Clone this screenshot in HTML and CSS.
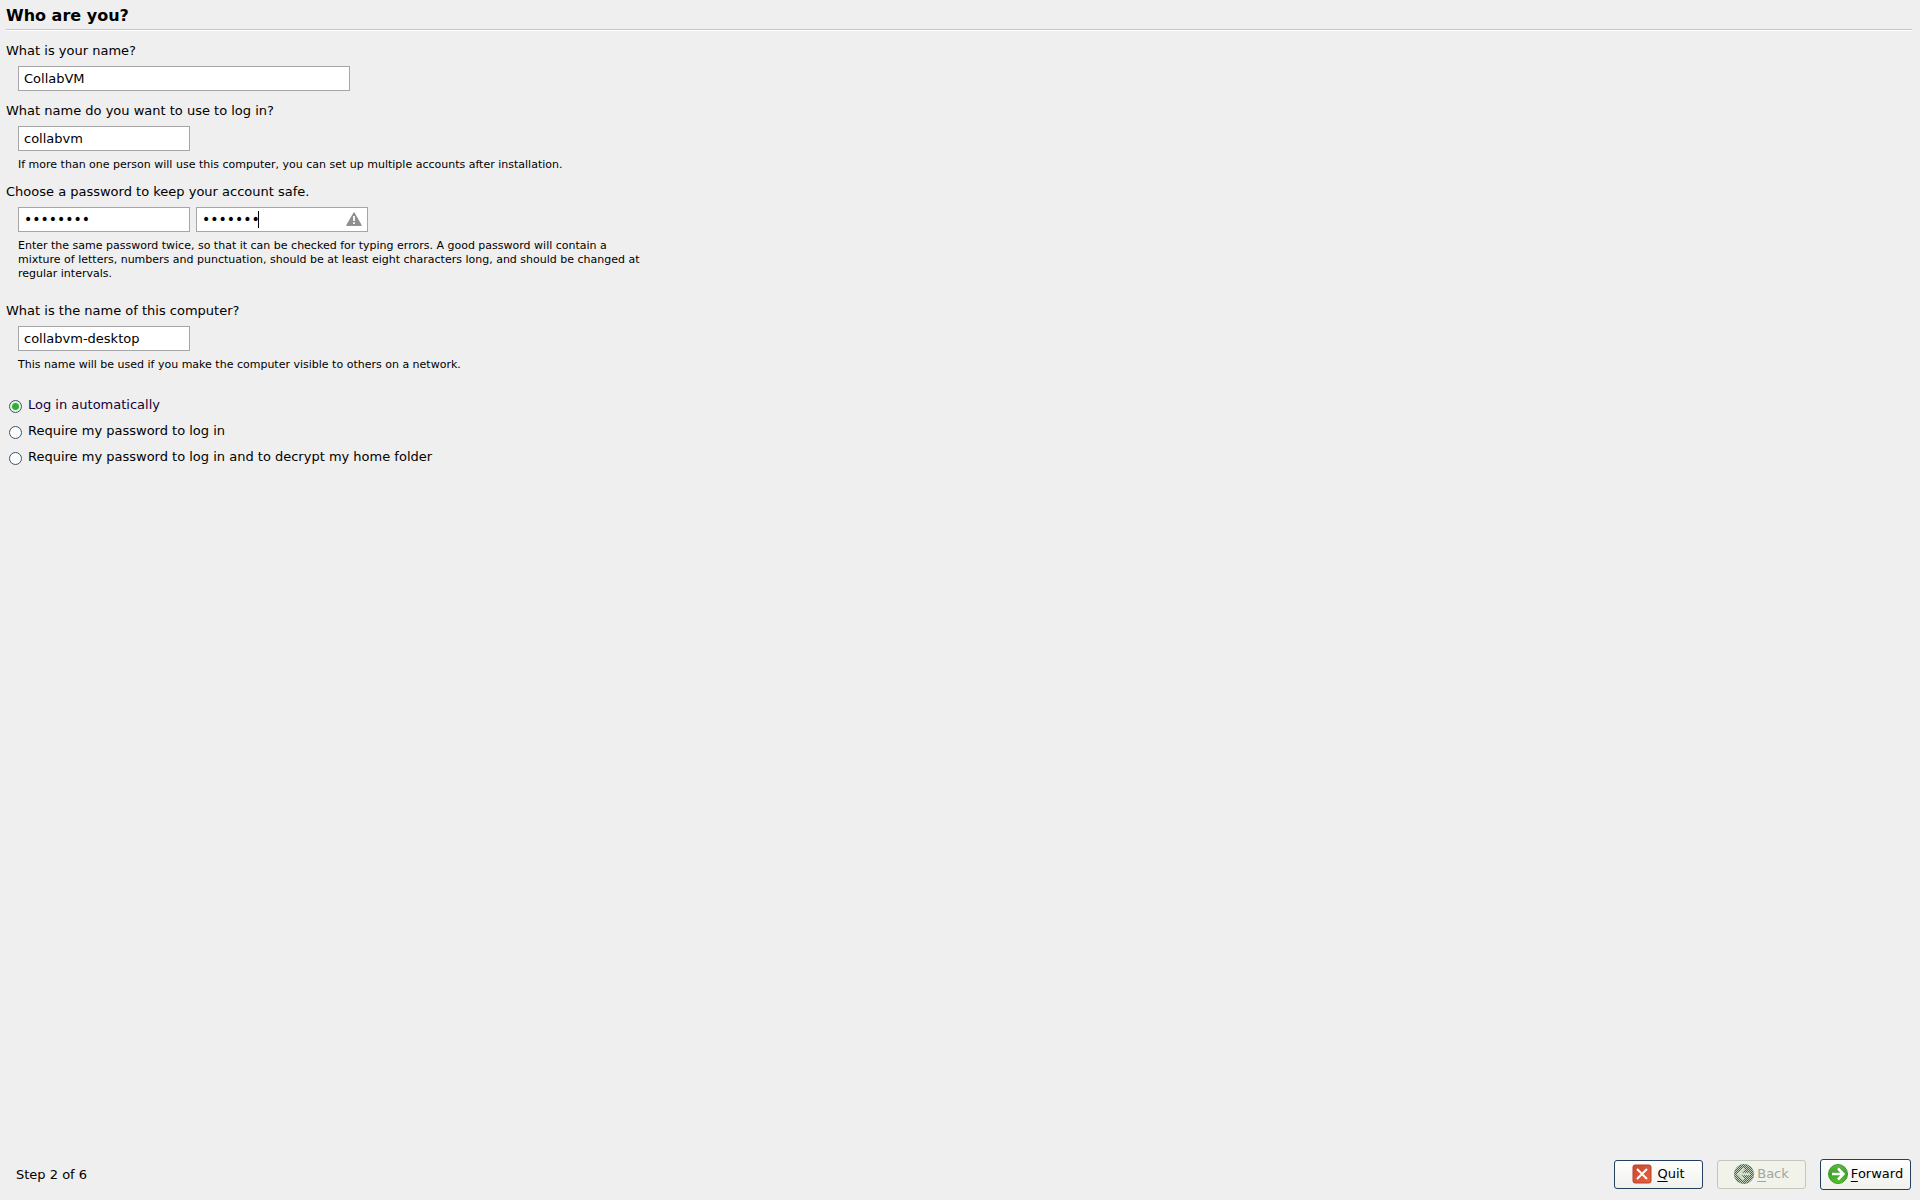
FILE: index.html
```html
<!DOCTYPE html>
<html lang="en">
<head>
<meta charset="utf-8">
<meta name="viewport" content="width=device-width, initial-scale=1">
<title>Install</title>
<link rel="stylesheet" href="styles.css">
</head>
<body>
<form class="installer">
  <h1 class="title">Who are you?</h1>
  <main class="page">
    <div class="group">
      <label class="question" for="fullname">What is your name?</label>
      <div class="fields"><input class="text-input wide" id="fullname" type="text" value="CollabVM"></div>
    </div>
    <div class="group">
      <label class="question" for="username">What name do you want to use to log in?</label>
      <div class="fields"><input class="text-input" id="username" type="text" value="collabvm"></div>
      <p class="hint">If more than one person will use this computer, you can set up multiple accounts after installation.</p>
    </div>
    <div class="group spaced">
      <label class="question" for="password">Choose a password to keep your account safe.</label>
      <div class="fields">
        <input class="text-input password" id="password" type="password" value="password">
        <div class="verify">
          <input class="text-input password" type="password" value="passwor" aria-label="Repeat password">
          <span class="caret"></span>
          <svg class="warning" viewBox="0 0 16 14" aria-hidden="true">
            <path d="M8 0.6 15.4 13.4H0.6Z" fill="#8f8f8f" stroke="#8f8f8f" stroke-linejoin="round"/>
            <path d="M8 4v5M8 10.3v1.7" stroke="#fff" stroke-width="1.8"/>
          </svg>
        </div>
      </div>
      <p class="hint">Enter the same password twice, so that it can be checked for typing errors. A good password will contain a mixture of letters, numbers and punctuation, should be at least eight characters long, and should be changed at regular intervals.</p>
    </div>
    <div class="group spaced">
      <label class="question" for="hostname">What is the name of this computer?</label>
      <div class="fields"><input class="text-input" id="hostname" type="text" value="collabvm-desktop"></div>
      <p class="hint">This name will be used if you make the computer visible to others on a network.</p>
    </div>
    <div class="choices" role="radiogroup" aria-label="Log in options">
      <label class="choice hovered"><input class="radio" type="radio" name="login" checked>Log in automatically</label>
      <label class="choice"><input class="radio" type="radio" name="login">Require my password to log in</label>
      <label class="choice"><input class="radio" type="radio" name="login">Require my password to log in and to decrypt my home folder</label>
    </div>
  </main>
  <footer class="footer">
    <span class="step">Step 2 of 6</span>
    <button class="button" type="button">
      <svg class="icon" viewBox="0 0 20 20" aria-hidden="true">
        <defs><linearGradient id="red" x2="1" y2="1"><stop stop-color="#c74a32"/><stop offset="1" stop-color="#e8603c"/></linearGradient></defs>
        <rect x="1" y="1" width="18" height="18" rx="2" fill="url(#red)" stroke="#b8432b"/>
        <path d="M5 5 15 15M15 5 5 15" stroke="#fff" stroke-width="2"/>
      </svg>
      <span><u>Q</u>uit</span>
    </button>
    <button class="button" type="button" disabled>
      <svg class="icon" viewBox="0 0 20 20" aria-hidden="true">
        <defs><pattern id="dots" width="2" height="2" patternUnits="userSpaceOnUse"><rect width="1" height="1" fill="#c5d2bd"/><rect x="1" y="1" width="1" height="1" fill="#c5d2bd"/></pattern></defs>
        <circle cx="10" cy="10" r="10" fill="#35703f"/>
        <path d="M16 10H5M10 4.500 4.500 10 10 15.500" fill="none" stroke="#dfe8da" stroke-width="2.500"/>
        <circle cx="10" cy="10" r="10" fill="url(#dots)"/>
      </svg>
      <span><u>B</u>ack</span>
    </button>
    <button class="button default" type="button">
      <svg class="icon" viewBox="0 0 20 20" aria-hidden="true">
        <defs><linearGradient id="green" x2="0" y2="1"><stop stop-color="#66b550"/><stop offset=".5" stop-color="#3ba226"/><stop offset="1" stop-color="#59c52c"/></linearGradient></defs>
        <circle cx="10" cy="10" r="9.500" fill="url(#green)" stroke="#359a2b"/>
        <path d="M4 10H15M10 4.500 15.500 10 10 15.500" fill="none" stroke="#fff" stroke-width="2.500"/>
      </svg>
      <span><u>F</u>orward</span>
    </button>
  </footer>
</form>
</body>
</html>
```
FILE: styles.css
```css
* {
  box-sizing: border-box;
}

body {
  margin: 0;
  background: #efefef;
  color: #000;
  font-family: "DejaVu Sans", sans-serif;
  font-size: 13px;
  line-height: 20px;
}

.installer {
  display: flex;
  flex-direction: column;
  min-height: 100vh;
  padding: 0 8px 0 6px;
}

.title {
  margin: 0;
  padding: 6px 0 3px;
  border-bottom: 1px solid #c6c6c4;
  box-shadow: 0 1px #fff;
  font: bold 16px/20px "DejaVu Sans", sans-serif;
}

.page {
  flex: 1;
  padding-top: 11px;
}

.group {
  margin-bottom: 10px;
}

.question {
  display: block;
}

.fields {
  display: flex;
  gap: 6px;
  margin: 5px 0 0 12px;
}

.text-input {
  display: block;
  width: 172px;
  height: 25px;
  margin: 0;
  padding: 0 5px 1px;
  border: 1px solid #a6a6a6;
  border-radius: 0;
  outline: 0;
  background: #fff;
  color: #000;
  font: inherit;
}

.wide {
  width: 332px;
}

.password {
  font-size: 14px;
}

.verify {
  position: relative;
}

.caret {
  position: absolute;
  top: 4px;
  left: 62px;
  width: 1px;
  height: 17px;
  background: #000;
}

.warning {
  position: absolute;
  top: 5px;
  right: 6px;
  width: 16px;
  height: 14px;
}

.hint {
  max-width: 630px;
  margin: 6px 0 0 12px;
  padding-top: 1px;
  font: 11px/14px "DejaVu Sans", sans-serif;
}

.spaced {
  margin-bottom: 20px;
}

.choice {
  display: flex;
  align-items: center;
  gap: 6px;
  height: 26px;
  padding-left: 3px;
}

.hovered {
  color: #14003c;
}

.radio {
  appearance: none;
  width: 13px;
  height: 13px;
  margin: 2px 0 0;
  border: 1px solid #3c5468;
  border-radius: 50%;
  background: #fbfdfe;
}

.radio:checked {
  background: radial-gradient(circle, #35ac35 3px, #e4f6e2 4px);
}

.footer {
  display: flex;
  align-items: center;
  gap: 14px;
  padding: 0 1px 10px 10px;
}

.step {
  flex: 1;
}

.button {
  display: flex;
  align-items: center;
  justify-content: center;
  gap: 5px;
  width: 89px;
  height: 29px;
  padding: 0 0 1px;
  border: 1px solid #24405e;
  border-radius: 3px;
  background: linear-gradient(#fff, #f0f0ec);
  color: #000;
  font: inherit;
}

.button:disabled {
  gap: 3px;
  border-color: #c4c7bc;
  background: #f1f2e9;
  color: #a3a59d;
}

.button.default {
  gap: 3px;
  width: 91px;
  height: 31px;
}

.icon {
  flex: none;
  width: 20px;
  height: 20px;
}

u {
  text-underline-offset: 3px;
}
```
